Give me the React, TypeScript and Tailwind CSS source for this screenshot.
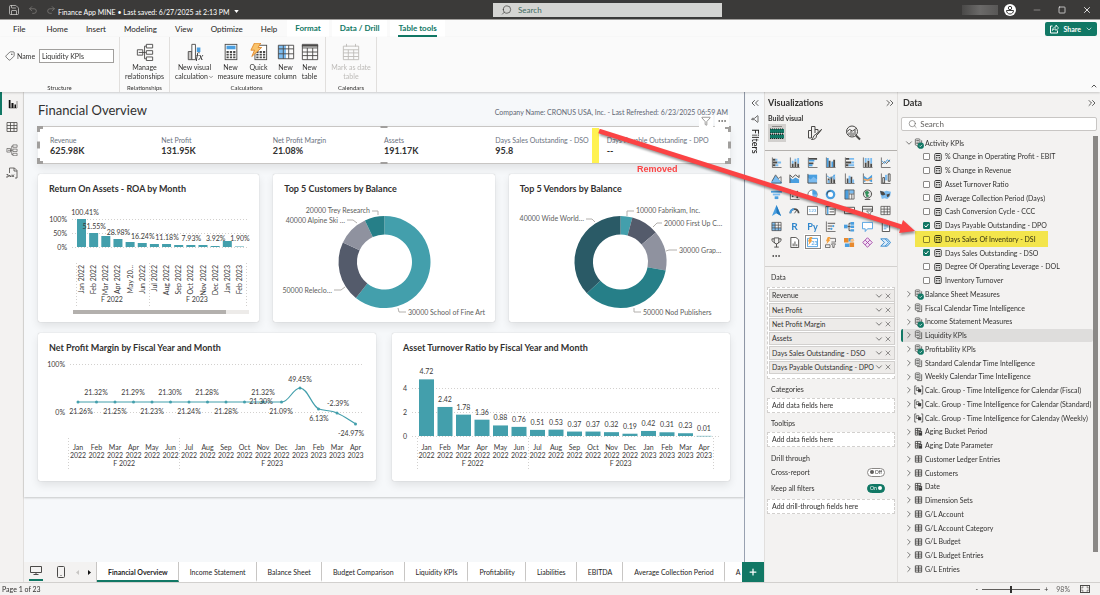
import clsx from "clsx";
import {
  ChevronDown,
  ChevronRight,
  ChevronsLeft,
  ChevronsRight,
  ChevronUp,
  Ellipsis,
  Funnel,
  Minus,
  Plus,
  Redo2,
  Save,
  Search,
  Square,
  Tag,
  Undo2,
  X,
} from "lucide-react";
import { ReactNode, useState } from "react";

const DARK = "#4b4a48";
const BLUE = "#4a9fe0";
const SKY = "#7cbcf0";
const TEAL = "#439fac";

/* ---------- data ---------- */

const menuTabs = ["File", "Home", "Insert", "Modeling", "View", "Optimize", "Help"];
const contextTabs = ["Format", "Data / Drill", "Table tools"];

const kpis = [
  { label: "Revenue", value: "625.98K" },
  { label: "Net Profit", value: "131.95K" },
  { label: "Net Profit Margin", value: "21.08%" },
  { label: "Assets", value: "191.17K" },
  { label: "Days Sales Outstanding - DSO", value: "95.8" },
  { label: "Days Payable Outstanding - DPO", value: "--" },
];

const roa = [
  { month: "Jan 2022", height: 28, label: "100.41%" },
  { month: "Feb 2022", height: 14, label: "51.55%" },
  { month: "Mar 2022", height: 11 },
  { month: "Apr 2022", height: 8, label: "28.98%" },
  { month: "May 20…", height: 5 },
  { month: "Jun 2022", height: 4, label: "16.24%" },
  { month: "Jul 2022", height: 3 },
  { month: "Aug 2022", height: 3, label: "11.18%" },
  { month: "Sep 2022", height: 2 },
  { month: "Oct 2022", height: 2, label: "7.93%" },
  { month: "Nov 2022", height: 2 },
  { month: "Dec 2022", height: 1, label: "3.92%" },
  { month: "Jan 2023", height: 6 },
  { month: "Feb 2023", height: 0.5, label: "1.90%" },
];

const months = [
  "Jan 2022",
  "Feb 2022",
  "Mar 2022",
  "Apr 2022",
  "May 2022",
  "Jun 2022",
  "Jul 2022",
  "Aug 2022",
  "Sep 2022",
  "Oct 2022",
  "Nov 2022",
  "Dec 2022",
  "Jan 2023",
  "Feb 2023",
  "Mar 2023",
  "Apr 2023",
];

const turnover = [
  4.72, 2.42, 1.78, 1.36, 0.88, 0.76, 0.51, 0.53, 0.37, 0.37, 0.32, 0.19, 0.42,
  0.31, 0.23, 0.01,
];

const marginLabels = [
  { x: 43, y: 59, text: "21.26%" },
  { x: 58, y: 40, text: "21.32%" },
  { x: 77, y: 59, text: "21.25%" },
  { x: 95, y: 40, text: "21.29%" },
  { x: 114, y: 59, text: "21.23%" },
  { x: 132, y: 40, text: "21.30%" },
  { x: 151, y: 59, text: "21.24%" },
  { x: 169, y: 40, text: "21.28%" },
  { x: 188, y: 59, text: "21.28%" },
  { x: 225, y: 40, text: "21.32%" },
  { x: 223, y: 49, text: "21.30%" },
  { x: 243, y: 59, text: "21.09%" },
  { x: 262, y: 27, text: "49.45%" },
  { x: 281, y: 66, text: "6.13%" },
  { x: 300, y: 51, text: "-2.39%" },
  { x: 313, y: 81, text: "-24.97%" },
];

type Slice = { from: number; to: number; color: string };
type Callout = { x: number; y: number; text: string; line: string; end?: boolean };

const customerSlices: Slice[] = [
  { from: 0, to: 218.5, color: "#439fac" },
  { from: 218.5, to: 295.2, color: "#545b6b" },
  { from: 295.2, to: 334.8, color: "#8f929f" },
  { from: 334.8, to: 360, color: "#267f88" },
];
const customerCallouts: Callout[] = [
  { x: 97, y: 17, text: "20000 Trey Research", line: "M99 15h6v4", end: true },
  { x: 72, y: 27, text: "40000 Alpine Ski …", line: "M74 24h6l4 3", end: true },
  { x: 59, y: 97, text: "50000 Releclo…", line: "M61 94h7l4-3", end: true },
  { x: 135, y: 119, text: "30000 School of Fine Art", line: "M125 112l1 4h7" },
];

const vendorSlices: Slice[] = [
  { from: 0, to: 15, color: "#439fac" },
  { from: 15, to: 50.2, color: "#545b6b" },
  { from: 50.2, to: 100.8, color: "#8f929f" },
  { from: 100.8, to: 227, color: "#267f88" },
  { from: 227, to: 360, color: "#2a5a66" },
];
const vendorCallouts: Callout[] = [
  { x: 75, y: 25, text: "40000 Wide World…", line: "M77 23h6l3 3", end: true },
  { x: 127, y: 17, text: "10000 Fabrikam, Inc.", line: "M118 20v-5h7" },
  { x: 155, y: 30, text: "20000 First Up C…", line: "M144 31l4-4h5" },
  { x: 170, y: 57, text: "30000 Grap…", line: "M157 55l3-1h8" },
  { x: 134, y: 119, text: "50000 Nod Publishers", line: "M125 112v4h7" },
];

const fieldWells = [
  "Revenue",
  "Net Profit",
  "Net Profit Margin",
  "Assets",
  "Days Sales Outstanding - DSO",
  "Days Payable Outstanding - DPO",
];

const measures = [
  { name: "% Change in Operating Profit - EBIT" },
  { name: "% Change in Revenue" },
  { name: "Asset Turnover Ratio" },
  { name: "Average Collection Period (Days)" },
  { name: "Cash Conversion Cycle - CCC" },
  { name: "Days Payable Outstanding - DPO", checked: true },
  { name: "Days Sales Of Inventory - DSI", marked: true },
  { name: "Days Sales Outstanding - DSO", checked: true },
  { name: "Degree Of Operating Leverage - DOL" },
  { name: "Inventory Turnover" },
];

type TableKind = "measures" | "used" | "group" | "calc" | "table";
const tables: { name: string; kind: TableKind }[] = [
  { name: "Balance Sheet Measures", kind: "used" },
  { name: "Fiscal Calendar Time Intelligence", kind: "measures" },
  { name: "Income Statement Measures", kind: "used" },
  { name: "Liquidity KPIs", kind: "measures" },
  { name: "Profitability KPIs", kind: "used" },
  { name: "Standard Calendar Time Intelligence", kind: "measures" },
  { name: "Weekly Calendar Time Intelligence", kind: "measures" },
  { name: "Calc. Group - Time Intelligence for Calendar (Fiscal)", kind: "group" },
  { name: "Calc. Group - Time Intelligence for Calendar (Standard)", kind: "group" },
  { name: "Calc. Group - Time Intelligence for Calenday (Weekly)", kind: "group" },
  { name: "Aging Bucket Period", kind: "calc" },
  { name: "Aging Date Parameter", kind: "calc" },
  { name: "Customer Ledger Entries", kind: "table" },
  { name: "Customers", kind: "table" },
  { name: "Date", kind: "calc" },
  { name: "Dimension Sets", kind: "table" },
  { name: "G/L Account", kind: "table" },
  { name: "G/L Account Category", kind: "table" },
  { name: "G/L Budget", kind: "table" },
  { name: "G/L Budget Entries", kind: "table" },
  { name: "G/L Entries", kind: "table" },
];

const pages = [
  "Financial Overview",
  "Income Statement",
  "Balance Sheet",
  "Budget Comparison",
  "Liquidity KPIs",
  "Profitability",
  "Liabilities",
  "EBITDA",
  "Average Collection Period",
];

/* ---------- icons ---------- */

const axis = <path d="M1.5 0.5v11h10" fill="none" stroke={DARK} strokeWidth=".8" />;
const grid = <path d="M1 1.5h10v9H1zM1 4.5h10M1 7.5h10M4.5 1.5v9M8 1.5v9" fill="none" stroke={DARK} strokeWidth=".8" />;

const visuals: { name: string; icon: ReactNode }[] = [
  { name: "Stacked bar chart", icon: <>{axis}<path d="M2 2h3v2H2zM2 5h5v2H2zM2 8h3v2H2z" fill={DARK} /><path d="M5 2h2v2H5zM7 5h4v2H7zM5 8h3v2H5z" fill={SKY} /></> },
  { name: "Stacked column chart", icon: <>{axis}<path d="M3 7h2v4H3zM6 5h2v6H6zM9 7h2v4H9z" fill={DARK} /><path d="M3 4h2v3H3zM6 2h2v3H6zM9 1h2v6H9z" fill={SKY} /></> },
  { name: "Clustered bar chart", icon: <>{axis}<path d="M2 1h9v2H2zM2 6h5v2H2z" fill={DARK} /><path d="M2 3h6v2H2zM2 8h4v2H2z" fill={BLUE} /></> },
  { name: "Clustered column chart", icon: <>{axis}<path d="M2 1h2v10H2zM7 5h2v6H7z" fill={BLUE} /><path d="M4 4h2v7H4zM9 3h2v8H9z" fill={DARK} /></> },
  { name: "100% stacked bar chart", icon: <>{axis}<path d="M2 1h4v2H2zM2 5h6v2H2zM2 8h3v2H2z" fill={DARK} /><path d="M6 1h5v2H6zM8 5h3v2H8zM5 8h6v2H5z" fill={SKY} /></> },
  { name: "100% stacked column chart", icon: <>{axis}<path d="M3 6h2v5H3zM6 4h2v7H6zM9 7h2v4H9z" fill={DARK} /><path d="M3 1h2v5H3zM6 1h2v3H6zM9 1h2v6H9z" fill={SKY} /></> },
  { name: "Line chart", icon: <>{axis}<path d="M2 8l3-3 2 2 4-4" fill="none" stroke={DARK} /><path d="M2 4l3 3 3-4 3 2" fill="none" stroke={BLUE} /></> },
  { name: "Area chart", icon: <><path d="M0 11l5-8 4 5 3 3z" fill={SKY} stroke={BLUE} strokeWidth=".7" /><path d="M1 9l4-7 3 4 3-2v7H1" fill="none" stroke={DARK} strokeWidth=".8" /></> },
  { name: "Stacked area chart", icon: <><path d="M1 5l3 2 3-2 4 2v4H1z" fill={BLUE} /><path d="M1 2l3 3 3-3 4 3V2M1 2v9" fill="none" stroke={DARK} /></> },
  { name: "100% stacked area chart", icon: <><path d="M1 2h10v9H1z" fill={SKY} /><path d="M1 2h10v5L7 4 4 7 1 5z" fill={BLUE} /><path d="M1 1v10h10" fill="none" stroke={DARK} /></> },
  { name: "Line and stacked column chart", icon: <>{axis}<path d="M3 6h2v5H3zM6 4h2v7H6zM9 5h2v6H9z" fill={DARK} /><path d="M3 8h2v3H3zM9 2h2v5H9z" fill={SKY} /><path d="M2 3l4 3 5-4" fill="none" stroke={BLUE} /></> },
  { name: "Line and clustered column chart", icon: <>{axis}<path d="M3 6h2v5H3zM7 4h2v7H7z" fill={DARK} /><path d="M5 3h2v8H5zM9 7h2v4H9z" fill={SKY} /></> },
  { name: "Ribbon chart", icon: <>{axis}<path d="M2 3l4 3 5-4v8l-5-2-4 2z" fill={BLUE} /><path d="M2 6l4 1 5-2v2L6 9 2 8z" fill="#f0a868" /></> },
  { name: "Waterfall chart", icon: <>{axis}<path d="M3 5h2v6H3zM9 1h2v8H9z" fill="none" stroke={DARK} /><path d="M5.5 2H8v6H5.5z" fill={SKY} /></> },
  { name: "Funnel chart", icon: <><path d="M0 2h12v2H0z" fill={BLUE} /><path d="M2 5h8v2H2z" fill={SKY} /><path d="M4 8h4v3H4z" fill={BLUE} /></> },
  { name: "Scatter chart", icon: <>{axis}<circle cx="4" cy="8" r="1" fill={DARK} /><circle cx="7" cy="6" r="1" fill={BLUE} /><circle cx="9" cy="3" r="1" fill={DARK} /><circle cx="9" cy="9" r="1" fill={DARK} /></> },
  { name: "Pie chart", icon: <><circle cx="6" cy="6" r="5" fill="#fff" stroke={DARK} strokeWidth=".8" /><path d="M6 1a5 5 0 0 1 0 10z" fill={SKY} /><path d="M6 6V1a5 5 0 0 1 5 5z" fill={BLUE} /></> },
  { name: "Donut chart", icon: <><circle cx="6" cy="6" r="4" fill="none" stroke={BLUE} strokeWidth="2.5" /><path d="M2 6a4 4 0 0 1 4-4" fill="none" stroke={DARK} strokeWidth="1" /><circle cx="6" cy="6" r="2.5" fill="#fff" /></> },
  { name: "Treemap", icon: <><path d="M1 1h4v10H1z" fill={BLUE} /><path d="M6 1h5v4H6z" fill={SKY} /><path d="M1 1h10v10H1zM5.5 1v10M5.5 5.5H11M8.5 5.5V11" fill="none" stroke={DARK} strokeWidth=".8" /></> },
  { name: "Map", icon: <><circle cx="6" cy="5.5" r="4.5" fill="#ddd" stroke={DARK} /><path d="M3 3l3-1 2 2-2 2 2 2-3 1-1-3z" fill="#33915b" /><path d="M3 11.5h6" stroke={DARK} /></> },
  { name: "Filled map", icon: <><path d="M0 2l4 1 3-1 5 1-1 5-3 3-3-1-3 1-1-4z" fill={SKY} /><path d="M0 2l4 1 2 3-3 1-2-1zM7 6l4-1-1 3-2 1z" fill={DARK} /></> },
  { name: "Azure map", icon: <><path d="M6 0l5 12-5-3-5 3z" fill={BLUE} /><path d="M6 0l5 12-5-3z" fill="#2178bd" /></> },
  { name: "Gauge", icon: <><path d="M1.5 9a4.5 4.5 0 0 1 9 0" fill="none" stroke={DARK} strokeWidth="2" /><path d="M1.5 9a4.5 4.5 0 0 1 4-4.5" fill="none" stroke={BLUE} strokeWidth="2" /><path d="M6 9l3-4" stroke={DARK} /></> },
  { name: "Card", icon: <><path d="M.5 1.5h11v9H.5z" fill="#fff" stroke={DARK} strokeWidth=".8" /><text x="6" y="8" fontSize="5" textAnchor="middle" fill={BLUE}>123</text></> },
  { name: "Multi-row card", icon: <><path d="M1 1.5h10v9H1z" fill="#fff" stroke={DARK} /><path d="M3 2v8" stroke={BLUE} strokeWidth="1.5" /><path d="M5 4.5h5M5 7.5h5" stroke={DARK} /></> },
  { name: "KPI", icon: <><path d="M.5 2.5h11v7H.5z" fill="#fff" stroke={DARK} /><path d="M2 5h3" stroke={BLUE} strokeWidth="1.5" /><path d="M6 7l2-2 3 1" fill="none" stroke={DARK} /></> },
  { name: "Slicer", icon: <><path d="M.5 1.5h11v6M.5 1.5v9h5M.5 4.5h11" fill="none" stroke={DARK} /><path d="M5 6.5h6L9 9v2.5H7.5V9z" fill="#fff" stroke={DARK} strokeWidth=".8" /></> },
  { name: "Table", icon: grid },
  { name: "Matrix", icon: <><path d="M1 1.5h3.5v9H1zM4.5 7.5H11v3H4.5z" fill={SKY} />{grid}</> },
  { name: "R script visual", icon: <text x="6" y="10" fontSize="11" fontWeight="700" textAnchor="middle" fill="#2f86cc">R</text> },
  { name: "Python visual", icon: <text x="6" y="9.5" fontSize="10" fontWeight="700" textAnchor="middle" fill="#2f86cc">Py</text> },
  { name: "Key influencers", icon: <>{axis}<path d="M3 2.5h8M3 5.5h5M3 8.5h3" stroke={DARK} /><circle cx="9" cy="5.5" r="1.2" fill={BLUE} /><circle cx="7" cy="8.5" r="1.2" fill={BLUE} /></> },
  { name: "Decomposition tree", icon: <><path d="M0 4h4v4H0z" fill={BLUE} /><path d="M7 1h4v3H7zM7 5h4v2.5H7zM7 9h4v2.5H7z" fill={BLUE} /><path d="M4 6h3M5.5 2.5v8M5.5 2.5H7M5.5 10.5H7" fill="none" stroke={DARK} /></> },
  { name: "Q&A", icon: <path d="M.5 1.5h11v7H6l-2.5 3v-3h-3z" fill="#fff" stroke={BLUE} /> },
  { name: "Smart narrative", icon: <><path d="M2.5.5h6l2 2v9h-8z" fill="#fff" stroke={DARK} /><path d="M4 4.5h5M4 6.5h5M4 8.5h3" stroke={BLUE} /></> },
  { name: "Metrics", icon: <path d="M3.5 1h5v4a2.5 2.5 0 0 1-5 0zM3.5 2H1c0 3 1 3.5 3 4M8.5 2H11c0 3-1 3.5-3 4M6 7.5V11M3.5 11h5" fill="none" stroke={DARK} /> },
  { name: "Paginated report", icon: <><path d="M2 .5h5.5L10.5 3v8.5H2z" fill="#fff" stroke={DARK} /><path d="M4 7h1v3H4zM6 5h1v5H6zM8 8h1v2H8z" fill={DARK} /></> },
  { name: "Card (new)", icon: <><path d="M.5 1.5h11v9H.5z" fill="#fff" stroke={BLUE} /><text x="8" y="9" fontSize="6" textAnchor="middle" fill={BLUE}>23</text><path d="M3 0h3L4.5 3.5H6L1.5 9l1-4H1z" fill="#f5a03c" /></> },
  { name: "Slicer (new)", icon: <><path d="M5.5 1.5h6v4H7M.5 8.5h5v3h-5z" fill="none" stroke={DARK} strokeWidth=".8" /><path d="M7 7.5h4.5L10 9.5v2H8.5v-2z" fill="none" stroke={DARK} strokeWidth=".8" /><path d="M3 0h3L4.5 3H6L1.5 8l1-3.5H1z" fill="#f5a03c" /></> },
  { name: "ArcGIS map", icon: <><path d="M0 1h5v5H0zM6 6h5v5H6z" fill="#e88a2e" /><path d="M5 1h5v4H5zM1 7h5v4H1z" fill={BLUE} /><circle cx="9" cy="3.5" r="2" fill="#f7c48c" /></> },
  { name: "Power Apps", icon: <path d="M6 .8L11.2 6 6 11.2.8 6zM3.5 3.5l5 5M8.5 3.5l-5 5" fill="#f3e3f4" stroke="#a347a8" strokeWidth="1" /> },
  { name: "Power Automate", icon: <path d="M.8 2h4.7l4 4-4 4H.8l4-4zM5.5 2H8l3.5 4L8 10H5.5" fill="#d9ebfa" stroke="#2f86cc" /> },
];

const CalculatorIcon = ({ className }: { className?: string }) => (
  <svg viewBox="0 0 8 8" className={clsx("size-2 shrink-0", className)}>
    <rect x=".8" y=".5" width="6.4" height="7" rx="1" fill="#fff" stroke="#3b3a39" strokeWidth="1" />
    <path d="M2 2.5h4" stroke="#3b3a39" strokeWidth="1.3" />
    <path d="M2 4.5h4M2 6h4" stroke="#3b3a39" strokeWidth=".9" strokeDasharray="1 .5" />
  </svg>
);

const TableIcon = ({ kind }: { kind: TableKind }) => (
  <svg viewBox="0 0 10 11" className="mr-0.5 h-2.5 w-[9px] shrink-0 overflow-visible">
    {kind === "table" && (
      <path d="M1.5 2h7v7h-7zM1.5 4.5h7M1.5 6.7h7M5 2v7" fill="none" stroke="#3b3a39" strokeWidth=".9" />
    )}
    {kind === "calc" && (
      <>
        <path d="M1.5 9V1.5h6V4M1.5 4h6M4 1.5V9M1.5 6.5H4M1.5 9H4" fill="none" stroke="#3b3a39" strokeWidth=".9" />
        <rect x="5" y="4.5" width="4" height="5" fill="#3b3a39" />
        <path d="M6 6h2" stroke="#fff" strokeWidth=".6" />
      </>
    )}
    {kind === "group" && (
      <>
        <path d="M2.5 1H.8v9h1.7M8 1h1.700v9H8" fill="none" stroke="#3b3a39" strokeWidth=".8" />
        <path d="M2.5 3h3v3h-3z" fill="none" stroke="#3b3a39" strokeWidth=".8" />
        <path d="M4.5 4.5H8V8H4.5z" fill="#3b3a39" />
      </>
    )}
    {(kind === "measures" || kind === "used") && (
      <>
        <rect x="1.5" y="1" width="5" height="7" rx=".8" fill="#fff" stroke="#3b3a39" strokeWidth=".8" />
        <path d="M2.5 2.7h3M2.5 4.5h3M2.5 6h3" stroke="#3b3a39" strokeWidth=".8" />
        <path d="M3.5 9.5h5v-7" fill="none" stroke="#3b3a39" strokeWidth=".8" />
      </>
    )}
    {kind === "used" && (
      <>
        <circle cx="7.5" cy="8.5" r="3.5" fill="#117865" />
        <path d="M6 8.5l1 1 2-2" fill="none" stroke="#fff" strokeWidth=".8" />
      </>
    )}
  </svg>
);

const gridPath = "M1.5 2.5h17v15h-17zM1.5 6.5h17M1.5 12h17M7 2.5v15M13 2.5v15";

const ribbonIcons = {
  relationships: (
    <>
      <path d="M1.5 7.5h6v6h-6zM11.5 1.5h7v4h-7zM11.5 8.5h7v4h-7zM11.5 15.5h7v4h-7z" fill="none" stroke={DARK} />
      <path d="M3 10.5h8M9.5 3.5v14M9.5 3.5h2M9.5 17.5h2" fill="none" stroke={DARK} />
    </>
  ),
  visual: (
    <>
      <path d="M2.5 9.5h4v9h-4z" fill="#c8c6c4" stroke={DARK} />
      <path d="M6.5 1.5h4v17h-4z" fill="#fff" stroke={DARK} />
      <path d="M12 5h4v5h-4z" fill={BLUE} />
      <text x="15" y="19" fontSize="12" fontStyle="italic" textAnchor="middle" className="font-[Liberation_Serif]" fill="#222">fx</text>
    </>
  ),
  measure: (
    <>
      <rect x="3.5" y="1.5" width="13" height="17" fill="#fff" stroke={DARK} />
      <path d="M5 3h10v4H5z" fill={BLUE} />
      <path d="M5 10h10M5 13h10M5 16h10" stroke={DARK} strokeWidth="2" strokeDasharray="2.5 1.2" />
    </>
  ),
  quick: (
    <>
      <rect x="5.5" y="2.5" width="13" height="16" fill="#fff" stroke={DARK} />
      <path d="M7 10h10M7 13h10M7 16h10" stroke={DARK} strokeWidth="2" strokeDasharray="2.5 1.2" />
      <path d="M5 0h7l-3 5h4L2 15l3-7H1z" fill="#f9c36b" stroke="#e0872a" />
    </>
  ),
  column: (
    <>
      <path d="M1.5 2.5H10v15H1.5z" fill={SKY} />
      <path d={gridPath} fill="none" stroke={DARK} />
    </>
  ),
  table: (
    <>
      <path d="M1.5 1.5h17v17h-17zM1.5 5.5h17M1.5 10h17M1.5 14h17M7 5.5v13M13 5.5v13" fill="none" stroke={DARK} />
      <path d="M1 3h18" stroke={DARK} strokeWidth="2" />
    </>
  ),
  date: (
    <path d="M1.5 3.5h17v15h-17zM1.5 7.5h17M1.5 11h17M1.5 15h17M7 7.5v11M13 7.5v11M5 1v3M15 1v3" fill="none" stroke="#bdbbb8" />
  ),
};

/* ---------- ribbon ---------- */

const TitleBar = () => (
  <header className="grid h-5 shrink-0 grid-cols-[493fr_229px_378fr] items-center border-b border-[#a19f9d] bg-[#3b3a39] text-white">
    <div className="flex items-center gap-2 pl-2 text-[7px]">
      <button aria-label="Save"><Save className="size-3 stroke-[1.5] text-[#d2d0ce]" /></button>
      <button aria-label="Undo"><Undo2 className="size-2.5 text-[#797775]" /></button>
      <button aria-label="Redo"><Redo2 className="size-2.5 text-[#797775]" /></button>
      <button className="-ml-1.5 flex items-center gap-1 pt-1 leading-3">
        Finance App MINE • Last saved: 6/27/2025 at 2:13 PM
        <svg viewBox="0 0 6 4" className="h-[3px] w-[5px]">
          <path d="M0 0h6L3 4z" fill="#fff" />
        </svg>
      </button>
    </div>
    <label className="flex h-3.5 items-center gap-1.5 bg-[#d4d4d2] px-2 text-[#3b3a39]">
      <Search className="size-3 -scale-x-100 stroke-[1.5]" />
      <input
        className="w-full bg-transparent text-[8px] outline-none placeholder:text-[#3f6b62]"
        placeholder="Search"
      />
    </label>
    <div className="flex items-center justify-end pr-2">
      <span className="mr-1.5 h-2.5 w-9 bg-gradient-to-r from-[#4a4948] via-[#6b6a69] to-[#585756]" />
      <button aria-label="Account" className="mr-4">
        <svg viewBox="0 0 12 12" className="size-3">
          <circle cx="6" cy="6" r="6" fill="#fff" />
          <circle cx="6" cy="4" r="1.7" fill="none" stroke="#3b3a39" />
          <path d="M2.5 6.5h7c0 2-1.5 3.5-3.5 3.5S2.5 8.5 2.5 6.5z" fill="none" stroke="#3b3a39" />
        </svg>
      </button>
      <div className="flex gap-4">
        <button aria-label="Minimize"><Minus className="size-2.5 text-[#979593]" /></button>
        <button aria-label="Maximize"><Square className="size-2" /></button>
        <button aria-label="Close"><X className="size-2.5" /></button>
      </div>
    </div>
  </header>
);

const MenuBar = () => (
  <nav className="flex h-[17px] shrink-0 items-stretch bg-[#fafafa] pl-1 text-[8px] leading-4 text-[#252423]">
    {menuTabs.map((tab) => (
      <button key={tab} className="px-[9px] first:mr-[3px]">
        {tab}
      </button>
    ))}
    <div className="ml-px flex gap-[3px]">
      {contextTabs.map((tab) => (
        <button key={tab} className="bg-white px-2 font-bold text-[#117865]">
          <span
            className={clsx("block h-[17px]", {
              "border-b-2 border-[#117865]": tab === "Table tools",
            })}
          >
            {tab}
          </span>
        </button>
      ))}
    </div>
    <button className="mt-0.5 mr-[3px] ml-auto flex h-3.5 items-center gap-1 rounded-xs bg-[#117865] px-1 text-[7px] font-bold text-white">
      <svg viewBox="0 0 10 10" className="size-2.5" fill="none" stroke="#fff">
        <path d="M3.5 2h-2v7h7V6.5" />
        <path d="M3.5 6.5C3.5 4 5 3 7 3V1l2.500 3L7 6.500V5c-2 0-3 .5-3.500 1.500z" strokeWidth=".8" />
      </svg>
      Share
      <ChevronDown className="size-2" />
    </button>
  </nav>
);

type RibbonButtonProps = {
  icon: ReactNode;
  lines: string[];
  className: string;
  menu?: boolean;
};

const RibbonButton = ({ icon, lines, className, menu }: RibbonButtonProps) => (
  <button className={clsx("flex flex-col items-center text-center text-[7px] leading-[9px] whitespace-nowrap", className)}>
    <svg viewBox="0 0 20 20" className="mb-0.5 size-[18px]">
      {icon}
    </svg>
    <span>{lines[0]}</span>
    <span className="flex items-center">
      {lines[1]}
      {menu && <ChevronDown className="size-1.5" />}
    </span>
  </button>
);

const RibbonGroup = ({ title, className, children }: { title: string; className: string; children: ReactNode }) => (
  <section className={clsx("flex flex-col justify-between border-r border-[#e1dfdd] text-[#323130]", className)}>
    <div className="flex justify-center pt-1.5">{children}</div>
    <h3 className="text-center text-[6px] leading-2">{title}</h3>
  </section>
);

const Ribbon = () => (
  <div className="z-10 flex h-[55px] shrink-0 bg-[#fafafa] shadow-[0_1px_2px_rgba(0,0,0,0.18)]">
    <RibbonGroup title="Structure" className="w-[120px]">
      <label className="flex items-center gap-0.5 pt-1.5 text-[7px]">
        <Tag className="size-2.5 rotate-90 stroke-[1.5]" />
        Name
        <input
          className="ml-0.5 h-3.5 w-[75px] border border-[#a19f9d] bg-white px-0.5 outline-none"
          defaultValue="Liquidity KPIs"
        />
      </label>
    </RibbonGroup>
    <RibbonGroup title="Relationships" className="w-[50px]">
      <RibbonButton icon={ribbonIcons.relationships} lines={["Manage", "relationships"]} className="w-12" />
    </RibbonGroup>
    <RibbonGroup title="Calculations" className="w-[156px] pr-0.5">
      <RibbonButton icon={ribbonIcons.visual} lines={["New visual", "calculation"]} className="w-11" menu />
      <RibbonButton icon={ribbonIcons.measure} lines={["New", "measure"]} className="w-7" />
      <RibbonButton icon={ribbonIcons.quick} lines={["Quick", "measure"]} className="w-7" />
      <RibbonButton icon={ribbonIcons.column} lines={["New", "column"]} className="w-[26px]" />
      <RibbonButton icon={ribbonIcons.table} lines={["New", "table"]} className="w-[22px]" />
    </RibbonGroup>
    <RibbonGroup title="Calendars" className="w-[51px]">
      <RibbonButton icon={ribbonIcons.date} lines={["Mark as date", "table"]} className="w-11 text-[#bdbbb8]" />
    </RibbonGroup>
    <button aria-label="Collapse ribbon" className="mt-auto mr-0.5 mb-0.5 ml-auto">
      <ChevronUp className="size-2" />
    </button>
  </div>
);

const ViewRail = () => (
  <nav className="flex w-6 shrink-0 flex-col items-center border-r border-[#e1dfdd] bg-[#f3f2f1] text-[#605e5c]">
    <button aria-label="Report view" className="flex h-[23px] w-full items-center justify-center border-l-2 border-[#117865]">
      <svg viewBox="0 0 10 10" className="size-2.5">
        <path d="M1 1v8h8V2" fill="none" stroke="#8a8886" />
        <path d="M1 1h1.5v8H1zM3.5 4h2v5h-2zM6.5 5.5H8V9H6.5z" fill="#111" />
      </svg>
    </button>
    <button aria-label="Table view" className="flex h-[23px] items-center">
      <svg viewBox="0 0 12 12" className="size-3">{grid}</svg>
    </button>
    <button aria-label="Model view" className="flex h-[23px] items-center">
      <svg viewBox="0 0 20 20" className="size-3">{ribbonIcons.relationships}</svg>
    </button>
    <button aria-label="DAX query view" className="flex h-[23px] items-center">
      <svg viewBox="0 0 12 12" className="size-3">
        <path d="M3.5 6V1h5L11 3.5V11H9M8 1v3h3" fill="none" stroke={DARK} strokeWidth=".8" />
        <path d="M0 10h2V7.5H.5M3 10V8l2 2V8M6 7.5L8 10M8 7.5L6 10" fill="none" stroke={DARK} strokeWidth=".8" />
      </svg>
    </button>
  </nav>
);

/* ---------- report ---------- */

const Card = ({ title, children }: { title: string; children: ReactNode }) => (
  <article className="rounded-xs bg-white pt-2 shadow-[0_0_1px_rgba(0,0,0,0.3),0_4px_8px_rgba(0,0,0,0.09)]">
    <h2 className="pl-[11px] text-[9px] leading-[14px] font-bold text-[#323130]">{title}</h2>
    {children}
  </article>
);

const Plot = ({ width, children }: { width: number; children: ReactNode }) => (
  <svg
    viewBox={`0 0 ${width} 126`}
    preserveAspectRatio="xMinYMin meet"
    className="h-[126px] w-full fill-[#3b3a39] text-[7px]"
  >
    {children}
  </svg>
);

const Dotted = ({ d }: { d: string }) => (
  <path d={d} fill="none" stroke="#d2d0ce" strokeDasharray="1 2" />
);

const RoaChart = () => (
  <Plot width={221}>
    <Dotted d="M34 23.5h176M34 37.5h176M34 51.5h176M38.5 67v44M111.5 67v44M208.5 67v44" />
    <text x="29" y="26" textAnchor="end">100%</text>
    <text x="29" y="40" textAnchor="end">50%</text>
    <text x="29" y="54" textAnchor="end">0%</text>
    {roa.map(({ month, height, label }, i) => {
      const x = 39 + i * 12.15;
      const center = x + 5;
      return (
        <g key={month}>
          <rect x={x} y={51 - height} width="9" height={height} fill={TEAL} />
          {label && (
            <text x={i ? center : center + 3} y={47 - Math.max(height, 2)} textAnchor="middle">
              {label}
            </text>
          )}
          <text x={center + 2} y="69" textAnchor="end" transform={`rotate(-90 ${center + 2} 69)`}>
            {month}
          </text>
        </g>
      );
    })}
    <text x="74" y="106" textAnchor="middle">F 2022</text>
    <text x="159" y="106" textAnchor="middle">F 2023</text>
    <rect x="35" y="114" width="176" height="4" fill="#edebe9" />
    <rect x="35" y="114" width="153" height="4" fill="#b3b0ad" />
  </Plot>
);

const slicePath = (cx: number, cy: number, { from, to }: Slice) => {
  const point = (deg: number, r: number) => {
    const rad = (deg * Math.PI) / 180;
    return `${cx + r * Math.sin(rad)} ${cy - r * Math.cos(rad)}`;
  };
  const large = to - from > 180 ? 1 : 0;
  return `M${point(from, 46)}A46 46 0 ${large} 1 ${point(to, 46)}L${point(to, 27.5)}A27.5 27.5 0 ${large} 0 ${point(from, 27.5)}Z`;
};

const DonutChart = ({ slices, callouts }: { slices: Slice[]; callouts: Callout[] }) => (
  <Plot width={221}>
    {slices.map((slice) => (
      <path key={slice.from} d={slicePath(111.5, 66, slice)} fill={slice.color} />
    ))}
    {callouts.map(({ x, y, text, line, end }) => (
      <g key={text}>
        <path d={line} fill="none" stroke="#b3b0ad" />
        <text x={x} y={y} textAnchor={end ? "end" : "start"} fill="#605e5c">
          {text}
        </text>
      </g>
    ))}
  </Plot>
);

const MonthAxis = ({ start, step }: { start: number; step: number }) => (
  <>
    {months.map((name, i) => {
      const [month, year] = name.split(" ");
      return (
        <text key={name} textAnchor="middle">
          <tspan x={start + i * step} y="95">{month}</tspan>
          <tspan x={start + i * step} y="103">{year}</tspan>
        </text>
      );
    })}
    <text x={start + 2.5 * step} y="111" textAnchor="middle">F 2022</text>
    <text x={start + 10.5 * step} y="111" textAnchor="middle">F 2023</text>
  </>
);

const MarginChart = () => {
  const levels = [47, 47, 47, 47, 47, 47, 47, 47, 47, 47, 47, 47, 33, 54, 58, 69];
  return (
    <Plot width={337}>
      <Dotted d="M32 9.5h292M32 57.5h292M30.5 83v33M141.5 83v33" />
      <text x="27" y="12" textAnchor="end">100%</text>
      <text x="27" y="60" textAnchor="end">0%</text>
      <path
        d="M40 47h204c7 0 11-14 18-14 8 0 12 19 19 21 5 2 12 1 18 4 7 3 12 7 19 11"
        fill="none"
        stroke={TEAL}
        strokeWidth="1.2"
      />
      {levels.map((y, i) => (
        <circle key={i} cx={40 + i * 18.5} cy={y} r="1.5" fill={TEAL} />
      ))}
      {marginLabels.map(({ x, y, text }) => (
        <text key={x} x={x} y={y} textAnchor="middle">{text}</text>
      ))}
      <MonthAxis start={40} step={18.5} />
    </Plot>
  );
};

const TurnoverChart = () => (
  <Plot width={337}>
    <Dotted d="M20 33.5h308M20 57.5h308M20 81.5h308M25.5 83v33M136.5 83v33M321.5 83v33" />
    <text x="11" y="36">4</text>
    <text x="11" y="60">2</text>
    <text x="11" y="84">0</text>
    {turnover.map((value, i) => (
      <g key={months[i]}>
        <rect x={27 + i * 18.5} y={81 - value * 12} width="15" height={Math.max(value * 12, 0.5)} fill={TEAL} />
        <text x={34.5 + i * 18.5} y={76 - value * 12} textAnchor="middle">
          {value.toFixed(2)}
        </text>
      </g>
    ))}
    <MonthAxis start={34.5} step={18.5} />
  </Plot>
);

const KpiStrip = () => (
  <section className="relative grid h-[38px] grid-cols-6 border-y border-[#c8c6c4] bg-white px-3 shadow-[0_4px_8px_rgba(0,0,0,0.09)]">
    {kpis.map(({ label, value }) => (
      <div key={label} className="relative pt-[9px] whitespace-nowrap">
        <p className="text-[7px] leading-[9px] text-[#6b7280]">{label}</p>
        <p className="text-[9px] leading-[11px] font-bold text-[#323130]">{value}</p>
      </div>
    ))}
    <span className="absolute -top-px -left-px size-1.5 border-t-3 border-l-3 border-[#a19f9d]" />
    <span className="absolute -top-px -right-px size-1.5 border-t-3 border-r-3 border-[#a19f9d]" />
    <span className="absolute -bottom-px -left-px size-1.5 border-b-3 border-l-3 border-[#a19f9d]" />
    <span className="absolute -right-px -bottom-px size-1.5 border-r-3 border-b-3 border-[#a19f9d]" />
    <span className="absolute top-1/2 -left-px h-[7px] w-[3px] -translate-y-1/2 bg-[#a19f9d]" />
    <span className="absolute top-1/2 -right-px h-[7px] w-[3px] -translate-y-1/2 bg-[#a19f9d]" />
    <span className="absolute -top-px left-1/2 h-0.5 w-[7px] -translate-x-1/2 bg-[#a19f9d]" />
    <span className="absolute -bottom-px left-1/2 h-0.5 w-[7px] -translate-x-1/2 bg-[#a19f9d]" />
    <span className="absolute top-px right-[131px] bottom-0 w-[7px] bg-[#fff250]" />
    <div className="absolute right-px bottom-full flex gap-0.5">
      <button aria-label="Filters on visual" className="flex h-3 w-3.5 items-center justify-center bg-white">
        <Funnel className="size-2.5 stroke-[1.5] text-[#605e5c]" />
      </button>
      <button aria-label="More options" className="flex h-3 w-3.5 items-center justify-center bg-white">
        <Ellipsis className="size-2.5 text-[#605e5c]" />
      </button>
    </div>
  </section>
);

const PageTabs = () => {
  const [active, setActive] = useState(pages[0]);
  return (
    <footer className="flex h-5 shrink-0 bg-[#f3f2f1] text-[7px] text-[#252423]">
      <div className="flex w-[73px] shrink-0 items-center justify-between border-r border-[#c8c6c4] px-[5px]">
        <button aria-label="Desktop layout" className="flex h-[17px] w-3.5 flex-col items-center border-b-2 border-[#117865]">
          <svg viewBox="0 0 14 12" className="h-3 w-3.5">
            <path d="M1.5 2.5h11v6h-11zM7 8.5v2M4.5 10.5h5" fill="none" stroke={DARK} />
          </svg>
        </button>
        <button aria-label="Mobile layout" className="pl-1">
          <svg viewBox="0 0 10 14" className="h-3.5 w-2.5">
            <rect x="1.5" y="1.5" width="7" height="11" rx="1" fill="none" stroke={DARK} />
            <path d="M4.5 10.5h1" stroke={DARK} />
          </svg>
        </button>
        <button aria-label="Previous pages">
          <svg viewBox="0 0 3 5" className="h-[5px] w-[3px]"><path d="M3 0v5L0 2.5z" fill="#c8c6c4" /></svg>
        </button>
        <button aria-label="Next pages">
          <svg viewBox="0 0 3 5" className="h-[5px] w-[3px]"><path d="M0 0v5l3-2.5z" fill="#111" /></svg>
        </button>
      </div>
      <div className="flex min-w-0 flex-1 bg-white whitespace-nowrap">
        {pages.map((page) => (
          <button
            key={page}
            onClick={() => setActive(page)}
            className={clsx("shrink-0 border-r border-b-2 border-r-[#c8c6c4] pt-0.5 pr-2.5 pl-[11px]", {
              "border-b-[#117865] font-bold": page === active,
              "border-b-white": page !== active,
            })}
          >
            {page}
          </button>
        ))}
        <button aria-label="Next page tab" className="shrink-0 pl-[11px]">A</button>
      </div>
      <button aria-label="New page" className="z-10 -mr-5 flex w-[22px] shrink-0 items-center justify-center bg-[#117865] text-white">
        <Plus className="size-2.5 stroke-3" />
      </button>
    </footer>
  );
};

const Report = () => (
  <main className="relative flex min-w-0 flex-1 flex-col border-r border-[#98a1b0] bg-[#f6f8fa]">
    <div className="px-3.5 pb-4 shadow-[0_1px_2px_rgba(0,0,0,0.2)]">
      <div className="flex h-[34px] items-center justify-between">
        <h1 className="pt-0.5 text-[13px] leading-4 text-[#323130]">Financial Overview</h1>
        <p className="pt-1.5 pr-0.5 text-[7px] text-[#5f6673]">
          Company Name: CRONUS USA, Inc. - Last Refreshed: 6/23/2025 06:59 AM
        </p>
      </div>
      <KpiStrip />
      <div className="mt-2.5 grid grid-cols-3 gap-3.5">
        <Card title="Return On Assets - ROA by Month">
          <RoaChart />
        </Card>
        <Card title="Top 5 Customers by Balance">
          <DonutChart slices={customerSlices} callouts={customerCallouts} />
        </Card>
        <Card title="Top 5 Vendors by Balance">
          <DonutChart slices={vendorSlices} callouts={vendorCallouts} />
        </Card>
      </div>
      <div className="mt-[11px] grid grid-cols-2 gap-4">
        <Card title="Net Profit Margin by Fiscal Year and Month">
          <MarginChart />
        </Card>
        <Card title="Asset Turnover Ratio by Fiscal Year and Month">
          <TurnoverChart />
        </Card>
      </div>
    </div>
    <div className="flex-1" />
    <PageTabs />
  </main>
);

/* ---------- side panes ---------- */

const FiltersRail = () => (
  <aside className="flex w-[19px] shrink-0 flex-col items-center gap-1.5 bg-[#f6f8fa] pt-[5px] text-[#252423]">
    <button aria-label="Expand filters">
      <ChevronsLeft className="size-3 stroke-[1.5]" />
    </button>
    <Funnel className="size-2 rotate-90" />
    <h2 className="text-[9px] leading-3 font-semibold [writing-mode:vertical-rl]">Filters</h2>
  </aside>
);

const DropZone = ({ title, hint }: { title?: string; hint: string }) => (
  <section>
    {title && <h3 className="mt-[5px] mb-1 pl-1 leading-[10px]">{title}</h3>}
    <p className="h-[15px] border border-dashed border-[#d2d0ce] bg-white pl-1 leading-[13px]">{hint}</p>
  </section>
);

const Toggle = ({ label, on }: { label: string; on?: boolean }) => {
  const [checked, setChecked] = useState(!!on);
  return (
    <label className="relative flex h-4 items-center justify-between pr-2.5 pl-1">
      {label}
      <input
        type="checkbox"
        className="peer sr-only"
        checked={checked}
        onChange={() => setChecked((prev) => !prev)}
      />
      <span
        className={clsx("flex h-[9px] w-[18px] items-center justify-between rounded-full border px-0.5 text-[5px] leading-none", {
          "flex-row-reverse border-[#117865] bg-[#117865] text-white": checked,
          "border-[#8a8886] bg-white": !checked,
        })}
      >
        <span className={clsx("size-1 shrink-0 rounded-full", { "bg-white": checked, "bg-[#605e5c]": !checked })} />
        {checked ? "On" : "Off"}
      </span>
    </label>
  );
};

const VisualizationsPane = () => (
  <aside className="w-[134px] shrink-0 border-x border-[#e1dfdd] bg-[#f3f2f1] text-[7px] text-[#323130]">
    <div className="flex h-[22px] items-center justify-between pr-px pl-[3px]">
      <h2 className="text-[9px] font-bold">Visualizations</h2>
      <button aria-label="Collapse visualizations">
        <ChevronsRight className="size-3 stroke-[1.5]" />
      </button>
    </div>
    <h3 className="pl-[3px] leading-2 font-bold">Build visual</h3>
    <div className="flex h-[29px] items-start gap-5 border-b border-[#b3b0ad] pt-0.5 pl-[3px]">
      <button aria-label="Build visual" className="flex size-[18px] items-center justify-center bg-[#d2d0ce]">
        <svg viewBox="0 0 16 16" className="size-4">
          <path d="M3 1.5h10" stroke="#8a8886" />
          <path d="M1 4h14v4H1zM1 9.5h14v4H1z" fill="#117865" />
          <path d="M1 4h14M1 8h14M1 9.5h14M1 13.5h14" stroke="#222" strokeDasharray="1 1" />
        </svg>
      </button>
      <button aria-label="Format visual" className="flex size-[18px] items-center justify-center">
        <svg viewBox="0 0 16 16" className="size-4" fill="none" stroke={DARK}>
          <path d="M3 13H1.5V5.5h3V13zM4.5 12V1.5H8V8M8 4.5h3v2" />
          <path d="M14.5 4.5l-5 6-1-1M9.5 10.5c0 3-2 4-5 4 2-1 1.5-4 4-5l6-5z" />
        </svg>
      </button>
      <button aria-label="Analytics" className="flex size-[18px] items-center justify-center">
        <svg viewBox="0 0 16 16" className="size-4" fill="none" stroke={DARK}>
          <circle cx="7" cy="6.5" r="5.5" />
          <path d="M11 10.5l4 4" strokeWidth="2" />
          <path d="M4 10V7.5M6 11V6M8 11V7.5M10 10V5M1.5 7l3-2.5 3 1.5L12 3" />
        </svg>
      </button>
    </div>
    <div className="border-b border-[#d2d0ce] px-0.5 pt-[3px] pb-1">
      <div className="grid auto-rows-[16px] grid-cols-7">
        {visuals.map(({ name, icon }) => (
          <button
            key={name}
            aria-label={name}
            className={clsx("flex items-center justify-center", {
              "bg-white outline -outline-offset-2 outline-[#8a8886]": name === "Card (new)",
            })}
          >
            <svg viewBox="0 0 12 12" className="size-[11px]">{icon}</svg>
          </button>
        ))}
      </div>
      <button aria-label="More visuals" className="ml-1 flex h-3 items-center">
        <Ellipsis className="size-2.5" />
      </button>
    </div>
    <div className="px-0.5 pt-1">
      <h3 className="pl-1 leading-3">Data</h3>
      <ul className="mt-1 grid h-[92px] auto-rows-fr gap-px border border-dashed border-[#d2d0ce] bg-white px-px pt-px pb-1">
        {fieldWells.map((field) => (
          <li key={field} className="flex items-center border border-[#d2d0ce] bg-[#edebe9] px-0.5 whitespace-nowrap">
            <span className="flex-1">{field}</span>
            <button aria-label={`${field} options`}>
              <ChevronDown className="size-2.5 stroke-[1.5]" />
            </button>
            <button aria-label={`Remove ${field}`}>
              <X className="size-2 stroke-[1.5]" />
            </button>
          </li>
        ))}
      </ul>
      <DropZone title="Categories" hint="Add data fields here" />
      <DropZone title="Tooltips" hint="Add data fields here" />
      <h3 className="mt-[5px] pl-1 leading-3">Drill through</h3>
      <Toggle label="Cross-report" />
      <Toggle label="Keep all filters" on />
      <div className="mt-[3px]">
        <DropZone hint="Add drill-through fields here" />
      </div>
    </div>
  </aside>
);

const DataPane = () => (
  <aside className="flex w-[202px] shrink-0 flex-col bg-[#f3f2f1] text-[7px] text-[#323130]">
    <div className="flex h-[22px] items-center justify-between pr-0.5 pl-[5px]">
      <h2 className="text-[9px] font-bold">Data</h2>
      <button aria-label="Collapse data">
        <ChevronsRight className="size-3 stroke-[1.5]" />
      </button>
    </div>
    <label className="mx-[3px] mt-[3px] flex h-3.5 shrink-0 items-center gap-[3px] rounded-xs border border-[#c8c6c4] bg-white px-1.5">
      <Search className="size-2.5 stroke-[1.5] text-[#605e5c]" />
      <input className="w-full bg-transparent text-[8px] outline-none placeholder:text-[#605e5c]" placeholder="Search" />
    </label>
    <div className="mt-[5px] mb-1.5 flex flex-1 pr-0.5 pl-[3px]">
      <ul className="grid flex-1 auto-rows-fr whitespace-nowrap">
        <li className="flex items-center pl-[3px]">
          <ChevronDown className="size-2.5 shrink-0 stroke-[1.5]" />
          <TableIcon kind="used" />
          <span>Activity KPIs</span>
        </li>
        {measures.map(({ name, checked, marked }) => (
          <li key={name} className="relative flex items-center pl-[22px]">
            <label className="flex items-center">
              <input
                type="checkbox"
                defaultChecked={checked}
                className="peer size-[7px] appearance-none rounded-[1px] border border-[#8a8886] bg-white checked:border-[#117865] checked:bg-[#117865]"
              />
              {checked && (
                <svg viewBox="0 0 7 7" className="-ml-[7px] size-[7px]">
                  <path d="M1.5 3.5L3 5l2.5-3" fill="none" stroke="#fff" />
                </svg>
              )}
              <CalculatorIcon className="mr-[3px] ml-1" />
              {name}
            </label>
            {marked && (
              <span className="absolute inset-y-[-1px] left-3.5 w-[133px] bg-[#fff250] mix-blend-multiply" />
            )}
          </li>
        ))}
        {tables.map(({ name, kind }) => (
          <li
            key={name}
            className={clsx("flex items-center", {
              "rounded-xs border-l-2 border-[#117865] bg-[#dedddc] pl-px": name === "Liquidity KPIs",
              "pl-[3px]": name !== "Liquidity KPIs",
            })}
          >
            <ChevronRight className="size-2.5 shrink-0 stroke-[1.5]" />
            <TableIcon kind={kind} />
            <span>{name}</span>
          </li>
        ))}
      </ul>
      <div className="mb-6 w-[5px] bg-[#8a8886]" />
    </div>
  </aside>
);

const StatusBar = () => (
  <footer className="flex h-[13px] shrink-0 items-center justify-between border-t border-[#d2d0ce] bg-[#f3f2f1] pr-2.5 pl-0.5 text-[7px] text-[#323130]">
    <span>Page 1 of 23</span>
    <div className="flex items-center gap-1">
      <button aria-label="Zoom out">-</button>
      <input
        type="range"
        aria-label="Zoom"
        defaultValue={50}
        className="h-px w-[58px] appearance-none bg-[#605e5c] [&::-webkit-slider-thumb]:h-[7px] [&::-webkit-slider-thumb]:w-0.5 [&::-webkit-slider-thumb]:appearance-none [&::-webkit-slider-thumb]:bg-[#323130]"
      />
      <button aria-label="Zoom in">+</button>
      <span className="mr-1.5 ml-1 text-[#605e5c]">98%</span>
      <button aria-label="Fit to page">
        <svg viewBox="0 0 10 8" className="h-2 w-2.5">
          <rect x=".5" y=".5" width="9" height="7" fill="none" stroke={DARK} />
          <path d="M2 3.5V2h1.5M6.5 2H8v1.5M8 4.5V6H6.5M3.5 6H2V4.5" fill="none" stroke="#605e5c" strokeWidth=".8" />
        </svg>
      </button>
    </div>
  </footer>
);

/* Hand-drawn markup that sits on top of the report */
const RemovedNote = () => (
  <div className="pointer-events-none absolute top-[126px] right-[184px] z-20 h-[112px] w-[320px]">
    <svg viewBox="0 0 320 112" className="absolute inset-0 h-full w-full drop-shadow-[1px_2px_1px_rgba(0,0,0,0.4)]">
      <path d="M3 5l303 96" stroke="#fb4344" strokeWidth="4.5" />
      <path d="M319 105l-16 2 4-13z" fill="#fb4344" />
    </svg>
    <p className="absolute top-[35px] left-[41px] font-[Liberation_Sans] text-[9px] leading-4 font-bold text-[#fb4344]">Removed</p>
  </div>
);

export default function App() {
  return (
    <div className="relative flex h-screen flex-col overflow-hidden font-[Lato,sans-serif]">
      <TitleBar />
      <MenuBar />
      <Ribbon />
      <div className="flex min-h-0 flex-1">
        <ViewRail />
        <Report />
        <FiltersRail />
        <VisualizationsPane />
        <DataPane />
      </div>
      <StatusBar />
      <RemovedNote />
    </div>
  );
}
